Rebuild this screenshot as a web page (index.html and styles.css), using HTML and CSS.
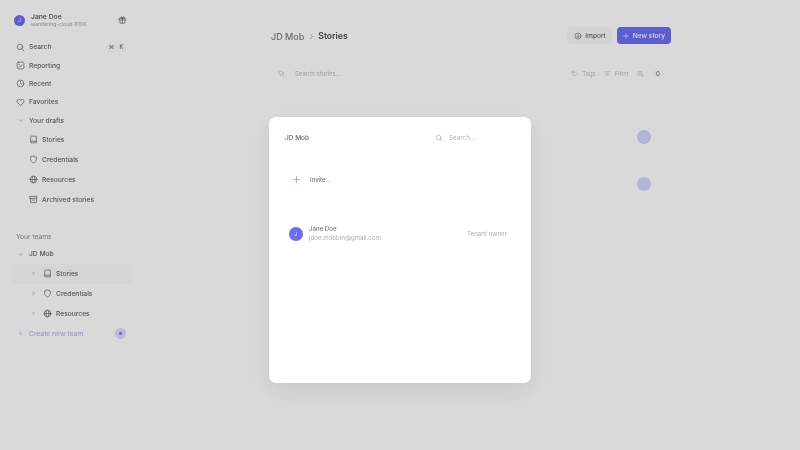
FILE: index.html
```html
<!DOCTYPE html>
<html lang="en">
<head>
  <meta charset="UTF-8">
  <meta name="viewport" content="width=device-width, initial-scale=1.0">
  <title>Stories</title>
  <link rel="stylesheet" href="styles.css">
</head>
<body>
<div class="app">
  <aside class="sidebar">
    <div class="account">
      <span class="avatar avatar-small">J</span>
      <div class="account-text">
        <div class="account-name">Jane Doe</div>
        <div class="account-sub">wandering-cloud-9106</div>
      </div>
      <svg class="icon gift" viewBox="0 0 16 16"><rect x="2.5" y="5" width="11" height="3"/><path d="M3.5 8v5.5h9V8M8 5v8.5M8 5C6 5 4.8 4.2 5 3s2.5-1.2 3 2c.5-3.2 2.8-3.2 3-2s-1 2-3 2"/></svg>
    </div>

    <div class="nav-row row-search">
      <svg class="icon" viewBox="0 0 16 16"><circle cx="7" cy="7" r="4.8"/><path d="M10.6 10.6l3.4 3.4"/></svg>
      <span class="grow">Search</span>
      <span class="key">⌘</span><span class="key">K</span>
    </div>
    <div class="nav-row row-tight">
      <svg class="icon" viewBox="0 0 16 16"><rect x="2" y="2" width="12" height="12" rx="2.5"/><path d="M5 11l2-2.5 2 1.5 2-3M5 6h1"/></svg>
      <span>Reporting</span>
    </div>
    <div class="nav-row row-tight">
      <svg class="icon" viewBox="0 0 16 16"><circle cx="8" cy="8" r="6"/><path d="M8 4.5V8l2.2 1.5"/></svg>
      <span>Recent</span>
    </div>
    <div class="nav-row row-tight">
      <svg class="icon" viewBox="0 0 16 16"><path d="M8 13.5L2.6 8a3.3 3.3 0 0 1 0-4.6 3.4 3.4 0 0 1 4.7 0l.7.7.7-.7a3.4 3.4 0 0 1 4.7 0 3.3 3.3 0 0 1 0 4.6z"/></svg>
      <span>Favorites</span>
    </div>
    <div class="nav-row row-tight">
      <svg class="icon chevron" viewBox="0 0 16 16"><path d="M5 6.500l3 3 3-3"/></svg>
      <span>Your drafts</span>
    </div>

    <div class="nav-row sub">
      <svg class="icon" viewBox="0 0 16 16"><path d="M3 12.500v-9A1.500 1.500 0 0 1 4.500 2H13v12H4.500A1.500 1.500 0 0 1 3 12.500 1.500 1.500 0 0 1 4.500 11H13"/></svg>
      <span>Stories</span>
    </div>
    <div class="nav-row sub">
      <svg class="icon" viewBox="0 0 16 16"><path d="M8 1.800l5 1.900v4c0 3-2 5.300-5 6.500-3-1.200-5-3.500-5-6.500v-4z"/></svg>
      <span>Credentials</span>
    </div>
    <div class="nav-row sub">
      <svg class="icon" viewBox="0 0 16 16"><circle cx="8" cy="8" r="6"/><ellipse cx="8" cy="8" rx="2.600" ry="6"/><path d="M2 8h12"/></svg>
      <span>Resources</span>
    </div>
    <div class="nav-row sub">
      <svg class="icon" viewBox="0 0 16 16"><rect x="2" y="2.500" width="12" height="3.500"/><path d="M3 6v7.500h10V6M6.500 9h3"/></svg>
      <span>Archived stories</span>
    </div>

    <div class="section-label">Your teams</div>
    <div class="nav-row row-team">
      <svg class="icon chevron" viewBox="0 0 16 16"><path d="M5 6.500l3 3 3-3"/></svg>
      <span>JD Mob</span>
    </div>
    <div class="nav-row team-item active">
      <svg class="icon chevron" viewBox="0 0 16 16"><path d="M6.500 5l3 3-3 3"/></svg>
      <svg class="icon" viewBox="0 0 16 16"><path d="M3 12.500v-9A1.500 1.500 0 0 1 4.500 2H13v12H4.500A1.500 1.500 0 0 1 3 12.500 1.500 1.500 0 0 1 4.500 11H13"/></svg>
      <span>Stories</span>
    </div>
    <div class="nav-row team-item">
      <svg class="icon chevron" viewBox="0 0 16 16"><path d="M6.500 5l3 3-3 3"/></svg>
      <svg class="icon" viewBox="0 0 16 16"><path d="M8 1.800l5 1.900v4c0 3-2 5.300-5 6.500-3-1.200-5-3.500-5-6.500v-4z"/></svg>
      <span>Credentials</span>
    </div>
    <div class="nav-row team-item">
      <svg class="icon chevron" viewBox="0 0 16 16"><path d="M6.500 5l3 3-3 3"/></svg>
      <svg class="icon" viewBox="0 0 16 16"><circle cx="8" cy="8" r="6"/><ellipse cx="8" cy="8" rx="2.600" ry="6"/><path d="M2 8h12"/></svg>
      <span>Resources</span>
    </div>
    <div class="nav-row create">
      <svg class="icon chevron" viewBox="0 0 16 16"><path d="M8 3.500v9M3.500 8h9"/></svg>
      <span class="grow">Create new team</span>
      <span class="create-dot"></span>
    </div>
  </aside>

  <main class="main">
    <div class="content">
      <div class="topbar">
        <div class="crumbs">
          <span class="crumb-team">JD Mob</span>
          <svg class="icon crumb-sep" viewBox="0 0 16 16"><path d="M6 3.500l4.500 4.500L6 12.500"/></svg>
          <span class="crumb-page">Stories</span>
        </div>
        <button class="btn btn-light">
          <svg class="icon" viewBox="0 0 16 16"><circle cx="8" cy="8" r="6"/><path d="M8 4.500v6M5.500 8.500L8 11l2.500-2.500"/></svg>
          Import
        </button>
        <button class="btn btn-primary">
          <svg class="icon" viewBox="0 0 16 16"><path d="M8 3v10M3 8h10"/></svg>
          New story
        </button>
      </div>

      <div class="filters">
        <svg class="icon" viewBox="0 0 16 16"><circle cx="7" cy="7" r="4.800"/><path d="M10.600 10.600l3.400 3.400"/></svg>
        <span class="filter-search">Search stories...</span>
        <span class="filter-item">
          <svg class="icon" viewBox="0 0 16 16"><path d="M2.500 2.500h5.500l6 6-5.500 5.500-6-6z"/><circle cx="5.500" cy="5.500" r=".6"/></svg>
          Tags
        </span>
        <span class="filter-item">
          <svg class="icon" viewBox="0 0 16 16"><path d="M2 4h12M4 8h8M6 12h4"/></svg>
          Filter
        </span>
        <svg class="icon" viewBox="0 0 16 16"><path d="M2 4h9M2 8h6M2 12h5M12 7v7M10 12l2 2 2-2"/></svg>
        <span class="filter-count">0</span>
      </div>

      <div class="story-list">
        <span class="story-dot">J</span>
        <span class="story-dot">J</span>
      </div>
    </div>
  </main>
</div>

<div class="overlay">
  <div class="modal">
    <div class="modal-head">
      <span class="modal-title">JD Mob</span>
      <svg class="icon" viewBox="0 0 16 16"><circle cx="7" cy="7" r="4.800"/><path d="M10.600 10.600l3.400 3.400"/></svg>
      <span class="modal-search">Search...</span>
    </div>
    <div class="invite">
      <svg class="icon invite-plus" viewBox="0 0 16 16"><path d="M8 2.500v11M2.500 8h11"/></svg>
      <span>Invite...</span>
    </div>
    <div class="member">
      <span class="avatar avatar-member">J</span>
      <div class="member-text">
        <div class="member-name">Jane Doe</div>
        <div class="member-mail">jdoe.mobbin@gmail.com</div>
      </div>
      <span class="member-role">Tenant owner</span>
    </div>
  </div>
</div>
</body>
</html>
```

FILE: styles.css
```css
* {
  box-sizing: border-box;
}
body {
  margin: 0;
  width: 800px;
  height: 450px;
  overflow: hidden;
  background: #fff;
  color: #55555d;
  font-family: Inter, "Liberation Sans", sans-serif;
  font-size: 8px;
}
.app {
  display: flex;
  height: 450px;
  will-change: opacity;
}
.icon {
  flex: none;
  width: 9px;
  height: 9px;
  fill: none;
  stroke: #5c5c64;
  stroke-width: 1.200;
  stroke-linecap: round;
  stroke-linejoin: round;
}
.grow {
  flex: 1;
}

/* sidebar */
.sidebar {
  flex: none;
  width: 142px;
  padding: 12px 10px 0 12px;
}
.account {
  display: flex;
  align-items: center;
  height: 16px;
  padding-left: 2px;
  margin-bottom: 9.500px;
}
.avatar {
  display: flex;
  align-items: center;
  justify-content: center;
  flex: none;
  border-radius: 50%;
  background: #6b6ef5;
  color: #fff;
}
.avatar-small {
  width: 11px;
  height: 11px;
  font-size: 5px;
  margin-right: 6px;
}
.account-text {
  flex: 1;
}
.account-name {
  font-size: 6.800px;
  font-weight: 500;
  line-height: 9px;
}
.account-sub {
  font-size: 5.100px;
  line-height: 7px;
  color: #a5a5a8;
}
.gift {
  margin-right: 5px;
  width: 9px;
  height: 10px;
}
.nav-row {
  display: flex;
  align-items: center;
  height: 18px;
  padding-left: 4px;
  gap: 4px;
  font-size: 6.700px;
  font-weight: 500;
  color: #66666e;
  white-space: nowrap;
}
.row-search {
  height: 19px;
}
.row-tight {
  height: 18.300px;
}
.chevron {
  width: 7px;
  height: 7px;
  margin: 0 1px;
  stroke: #777;
}
.key {
  display: flex;
  align-items: center;
  justify-content: center;
  width: 9px;
  height: 9px;
  margin-left: -3px;
  border-radius: 2px;
  background: #f9f9fa;
  font-size: 5.500px;
  color: #777;
}
.row-search .key:last-child {
  margin-right: 6px;
}
.sub {
  height: 20px;
  padding-left: 17px;
}
.section-label {
  margin-top: 21.500px;
  padding-left: 4px;
  height: 13.500px;
  line-height: 12px;
  font-size: 6.700px;
  color: #8a8a90;
}
.row-team {
  height: 19px;
}
.team-item {
  height: 20px;
  padding-left: 17px;
}
.team-item .chevron {
  margin-right: 2px;
}
.team-item.active {
  background: #fbfbfb;
  border-radius: 4px;
}
.create {
  height: 20px;
  color: #b5b6f0;
}
.create .chevron {
  stroke: #c6c7f4;
}
.create-dot {
  width: 11px;
  height: 11px;
  border-radius: 50%;
  background: #dcdcfb;
  margin-right: 6px;
  background-image: radial-gradient(circle, #7b7ef5 0 1.200px, transparent 1.800px);
}

/* main */
.main {
  flex: 1;
  display: flex;
  justify-content: center;
}
.content {
  width: 400px;
}
.topbar {
  display: flex;
  align-items: center;
  gap: 5px;
  padding-top: 27px;
  height: 44px;
}
.crumbs {
  flex: 1;
  display: flex;
  align-items: center;
  gap: 4px;
  padding-top: 1px;
  font-size: 9px;
  font-weight: 500;
}
.crumb-team {
  color: #7c7c84;
}
.crumb-sep {
  width: 7px;
  height: 7px;
}
.crumb-page {
  margin-left: -1px;
  font-size: 8.600px;
  color: #45454c;
  font-weight: 600;
}
.btn {
  display: flex;
  align-items: center;
  gap: 3px;
  height: 17px;
  border: none;
  border-radius: 4px;
  padding: 0 6px;
  font-family: inherit;
  font-size: 6.600px;
  font-weight: 500;
}
.btn .icon {
  width: 8px;
  height: 8px;
}
.btn-light {
  padding-left: 7px;
  background: #f8f8f8;
  color: #66666e;
}
.btn-primary {
  padding-left: 5px;
  background: #6b6ef5;
  color: #fff;
}
.btn-primary .icon {
  stroke: #fff;
}
.filters {
  display: flex;
  align-items: center;
  height: 20px;
  margin-top: 19px;
  padding: 0 8px 0 7px;
  gap: 8px;
  color: #bbbbbe;
  font-size: 6px;
}
.filters .icon {
  stroke: #aaa;
  width: 7px;
  height: 7px;
}
.filter-search {
  flex: 1;
  margin-left: 2px;
}
.filter-item {
  display: flex;
  align-items: center;
  gap: 4px;
}
.filter-count {
  width: 10px;
  text-align: center;
  margin-left: 1px;
  color: #666;
  background: #fafafa;
  border-radius: 3px;
}
.story-list {
  display: flex;
  flex-direction: column;
  align-items: flex-end;
  gap: 33px;
  margin-top: 47px;
  padding-right: 20px;
}
.story-dot {
  display: flex;
  align-items: center;
  justify-content: center;
  width: 14px;
  height: 14px;
  border-radius: 50%;
  background: #d3d4fb;
  color: #eee;
  font-size: 5px;
}

/* modal */
.overlay {
  position: absolute;
  top: 0;
  left: 0;
  width: 800px;
  height: 450px;
  display: flex;
  justify-content: center;
  padding-top: 117px;
  background: rgba(0, 0, 0, 0.15);
  will-change: opacity;
}
.modal {
  width: 262px;
  height: 266px;
  padding: 0 24px 0 16px;
  background: #fff;
  border-radius: 7px;
  box-shadow: 0 8px 24px rgba(0, 0, 0, 0.09);
}
.modal-head {
  display: flex;
  align-items: center;
  gap: 6px;
  height: 41px;
}
.modal-title {
  flex: 1;
  font-size: 6.500px;
  font-weight: 500;
  color: #66666e;
}
.modal-head .icon {
  width: 8px;
  height: 8px;
  stroke: #a5a5a8;
}
.modal-search {
  width: 58px;
  font-size: 6.300px;
  color: #b5b5b8;
}
.invite {
  display: flex;
  align-items: center;
  gap: 9px;
  margin-left: 7px;
  height: 42px;
  font-size: 6px;
  font-weight: 500;
  color: #77777e;
}
.invite-plus {
  stroke: #8588f0;
}
.member {
  display: flex;
  align-items: center;
  margin-top: 25px;
  padding-left: 4px;
  gap: 6px;
}
.avatar-member {
  width: 14px;
  height: 14px;
  font-size: 5px;
}
.member-text {
  flex: 1;
}
.member-name {
  font-size: 6.100px;
  font-weight: 500;
  line-height: 8.500px;
  color: #77777e;
}
.member-mail {
  font-size: 6.150px;
  line-height: 8.500px;
  color: #aeaeb2;
}
.member-role {
  font-size: 6.200px;
  color: #aeaeb2;
}
```
